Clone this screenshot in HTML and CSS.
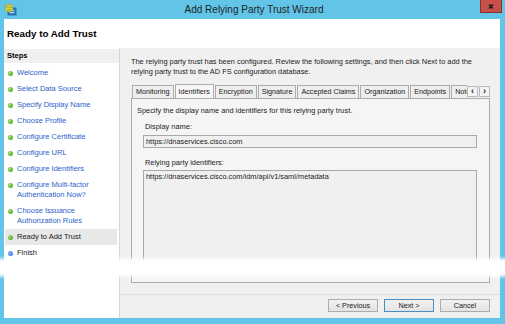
FILE: index.html
```html
<!DOCTYPE html>
<html>
  <head>
    <title>Add Relying Party Trust Wizard</title>
    <link rel="stylesheet" href="styles.css">
  </head>
  <body>
    <div class="window">
      <div class="titlebar">
        <svg class="app-icon" width="13" height="13" viewBox="0 0 13 13">
          <rect x="4" y="5" width="8" height="7" fill="#3d86c6" stroke="#1f5a90" stroke-width="0.8"/>
          <rect x="6" y="7" width="4" height="1" fill="#bfe0f5"/>
          <rect x="6" y="9" width="4" height="1" fill="#bfe0f5"/>
          <circle cx="5" cy="5" r="4" fill="#e8d44a" stroke="#8aa23a" stroke-width="0.8"/>
          <path d="M2 4 Q5 3 8 5 M3 7 Q5 6 7 7" stroke="#5fa83a" stroke-width="0.9" fill="none"/>
        </svg>
        <div class="title">Add Relying Party Trust Wizard</div>
        <svg class="close" width="22" height="13" viewBox="0 0 22 13">
          <rect x="0.5" y="-1" width="21" height="13.5" fill="#c7504a" stroke="#8e302b"/>
          <path d="M9 4.5 L13 8.5 M13 4.5 L9 8.5" stroke="#1a1a1a" stroke-width="1.6"/>
        </svg>
      </div>
      <div class="client">
        <div class="page-header">Ready to Add Trust</div>
        <div class="body">
          <div class="steps">
            <div class="steps-title">Steps</div>
            <ul class="step-list">
              <li class="step done"><span class="dot"></span><span class="label">Welcome</span></li>
              <li class="step done"><span class="dot"></span><span class="label">Select Data Source</span></li>
              <li class="step done"><span class="dot"></span><span class="label">Specify Display Name</span></li>
              <li class="step done"><span class="dot"></span><span class="label">Choose Profile</span></li>
              <li class="step done"><span class="dot"></span><span class="label">Configure Certificate</span></li>
              <li class="step done"><span class="dot"></span><span class="label">Configure URL</span></li>
              <li class="step done"><span class="dot"></span><span class="label">Configure Identifiers</span></li>
              <li class="step done"><span class="dot"></span><span class="label">Configure Multi-factor<br>Authentication Now?</span></li>
              <li class="step done"><span class="dot"></span><span class="label">Choose Issuance<br>Authorization Rules</span></li>
              <li class="step current"><span class="dot"></span><span class="label">Ready to Add Trust</span></li>
              <li class="step pending"><span class="dot"></span><span class="label">Finish</span></li>
            </ul>
          </div>
          <div class="main">
            <div class="content">
              <p class="intro">The relying party trust has been configured. Review the following settings, and then click Next to add the<br>relying party trust to the AD FS configuration database.</p>
              <div class="tab-strip">
                <div class="tab-list">
                  <div class="tab">Monitoring</div>
                  <div class="tab selected">Identifiers</div>
                  <div class="tab">Encryption</div>
                  <div class="tab">Signature</div>
                  <div class="tab">Accepted Claims</div>
                  <div class="tab">Organization</div>
                  <div class="tab">Endpoints</div>
                  <div class="tab">Notes</div>
                </div>
                <div class="tab-scroll">
                  <span class="scroll-btn">&lsaquo;</span>
                  <span class="scroll-btn">&rsaquo;</span>
                </div>
              </div>
              <div class="tab-panel">
                <p class="panel-text">Specify the display name and identifiers for this relying party trust.</p>
                <div class="field-label">Display name:</div>
                <div class="textbox">https://dnaservices.cisco.com</div>
                <div class="field-label second">Relying party identifiers:</div>
                <div class="textarea">https://dnaservices.cisco.com/idm/api/v1/saml/metadata</div>
              </div>
            </div>
            <div class="footer">
              <div class="button">&lt; Previous</div>
              <div class="button default">Next &gt;</div>
              <div class="button">Cancel</div>
            </div>
          </div>
        </div>
      </div>
      <div class="tear"></div>
    </div>
  </body>
</html>
```

FILE: styles.css
```css
body {
  margin: 0;
  font-family: "Liberation Sans", Arial, sans-serif;
  color: #1a1a1a;
}

.window {
  position: relative;
  width: 505px;
  height: 324px;
  box-sizing: border-box;
  padding: 0 5px 6px 4px;
  background-color: #62c5e8;
  display: flex;
  flex-direction: column;
  overflow: hidden;
}

.titlebar {
  height: 19px;
  flex-shrink: 0;
  display: flex;
  align-items: flex-start;
}

.app-icon {
  width: 40px;
  margin-top: 3px;
  padding-right: 27px;
  box-sizing: border-box;
}

.title {
  flex: 1;
  font-size: 10px;
  line-height: 19px;
  color: #1e1e1e;
  text-align: center;
}

.close {
  flex-shrink: 0;
  margin-left: 16px;
  margin-right: -2px;
}

.client {
  flex: 1;
  min-height: 0;
  background-color: #fff;
  display: flex;
  flex-direction: column;
}

.page-header {
  height: 29px;
  flex-shrink: 0;
  display: flex;
  align-items: center;
  padding-left: 3px;
  font-size: 9.8px;
  font-weight: bold;
  color: #000;
}

.body {
  flex: 1;
  min-height: 0;
  display: flex;
}

.steps {
  width: 116px;
  flex-shrink: 0;
  box-sizing: border-box;
  border-right: 1px solid #d6d6d6;
  background-color: #fff;
}

.steps-title {
  margin-top: 1px;
  height: 14px;
  line-height: 14px;
  padding-left: 3px;
  background-color: #efefef;
  font-size: 7.5px;
  font-weight: bold;
  color: #000;
}

.step-list {
  list-style: none;
  margin: 2px 0 0;
  padding: 0;
}

.step {
  display: flex;
  align-items: flex-start;
  padding: 3px 0 3px 4px;
  font-size: 7.5px;
  line-height: 10px;
  color: #2a62c9;
  white-space: nowrap;
}

.dot {
  width: 5px;
  height: 5px;
  margin: 2.5px 4px 0 0;
  border-radius: 50%;
  flex-shrink: 0;
  background: radial-gradient(circle at 35% 35%, #9be06a, #3f9a1f);
}

.step.current {
  color: #1a1a1a;
  background-color: #e8e8e8;
  margin: 0 2px 0 1px;
  padding-left: 3px;
}

.step.pending {
  color: #1a1a1a;
}

.step.pending .dot {
  background: radial-gradient(circle at 35% 35%, #7fb4ff, #2a6fd8);
}

.main {
  flex: 1;
  min-width: 0;
  background-color: #f0f0f0;
  display: flex;
  flex-direction: column;
}

.content {
  flex: 1;
  min-height: 0;
  display: flex;
  flex-direction: column;
  padding: 9px 10px 0 11px;
}

.intro {
  margin: 0;
  font-size: 7.4px;
  line-height: 10px;
  white-space: nowrap;
}

.tab-strip {
  display: flex;
  align-items: flex-end;
  margin-top: 6px;
  padding-left: 1px;
  height: 15px;
  flex-shrink: 0;
}

.tab-list {
  flex: 1;
  min-width: 0;
  display: flex;
  align-items: flex-end;
  overflow: hidden;
}

.tab {
  flex-shrink: 0;
  height: 13px;
  box-sizing: border-box;
  padding: 0 3px;
  margin-right: 1px;
  border: 1px solid #adadad;
  border-bottom: none;
  background-color: #eeeeee;
  font-size: 7.2px;
  line-height: 12px;
  white-space: nowrap;
}

.tab.selected {
  height: 15px;
  background-color: #f7f7f7;
  line-height: 13px;
  position: relative;
  top: 1px;
}

.tab-scroll {
  display: flex;
  gap: 1px;
  align-self: center;
  margin-top: 2px;
}

.scroll-btn {
  width: 11px;
  height: 11px;
  box-sizing: border-box;
  border: 1px solid #b8b8b8;
  background-color: #f4f4f4;
  font-size: 9px;
  line-height: 8px;
  text-align: center;
  font-weight: bold;
}

.tab-panel {
  flex: 1;
  min-height: 0;
  display: flex;
  flex-direction: column;
  border: 1px solid #adadad;
  background-color: #f5f5f5;
  padding: 7px 12px 10px 5px;
}

.panel-text {
  margin: 0;
  font-size: 7.4px;
  line-height: 10px;
}

.field-label {
  margin-top: 6px;
  padding-left: 8px;
  font-size: 7.4px;
  line-height: 10px;
}

.field-label.second {
  margin-top: 10px;
}

.textbox,
.textarea {
  margin-left: 6px;
  box-sizing: border-box;
  border: 1px solid #a8a8a8;
  background-color: #f0f0f0;
  font-size: 7.4px;
  padding: 0 2px;
}

.textbox {
  margin-top: 3px;
  height: 13px;
  line-height: 11px;
}

.textarea {
  margin-top: 2px;
  flex: 1;
  line-height: 10px;
  padding-top: 1px;
}

.footer {
  height: 24px;
  flex-shrink: 0;
  margin-top: 11px;
  box-sizing: border-box;
  border-top: 1px solid #dedede;
  display: flex;
  justify-content: flex-end;
  align-items: center;
  gap: 6px;
  padding: 0 10px 2px 0;
}

.button {
  width: 50px;
  height: 13px;
  box-sizing: border-box;
  border: 1px solid #acacac;
  background: linear-gradient(#f2f2f2, #e3e3e3);
  font-size: 7.2px;
  line-height: 11px;
  text-align: center;
}

.button.default {
  border-color: #4a8cc4;
}

.tear {
  position: absolute;
  left: 0;
  right: 0;
  top: 256px;
  height: 23px;
  background: linear-gradient(rgba(255, 255, 255, 0), #fff 5px, #fff 18px, rgba(255, 255, 255, 0));
}
```
